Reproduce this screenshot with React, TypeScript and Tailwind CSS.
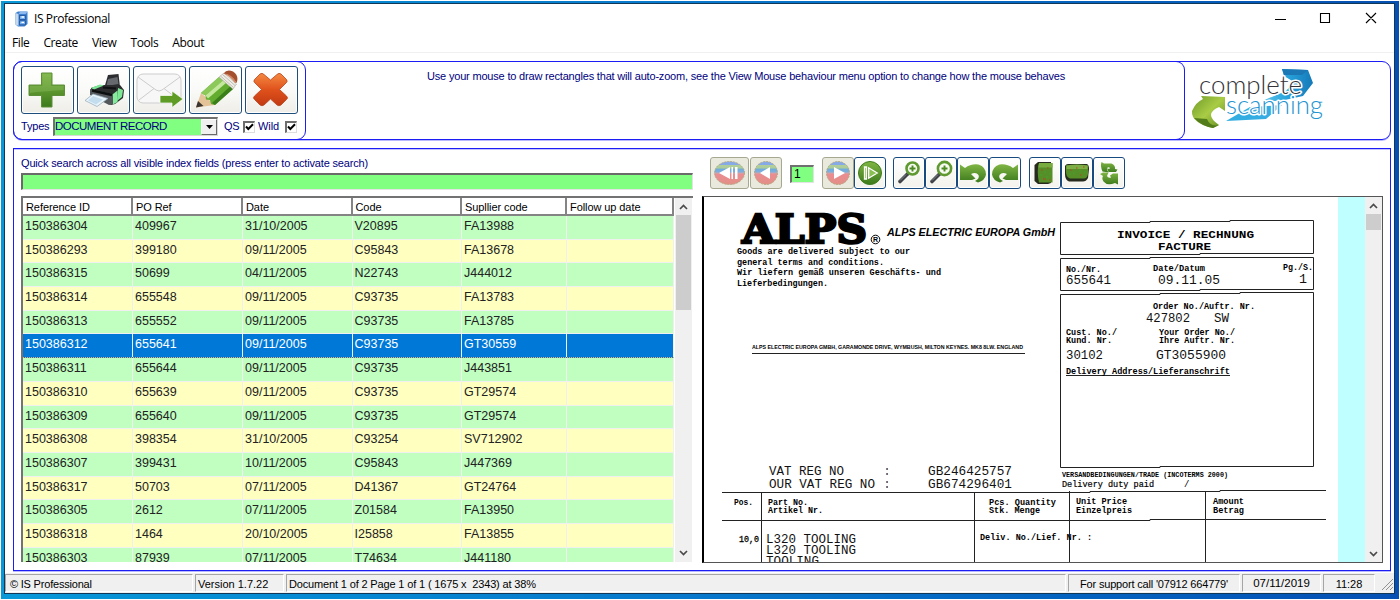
import React from "react";

const ui = "font-['Liberation_Sans',sans-serif]";

const columns = [
  { title: "Reference ID", width: "w-[110px]" },
  { title: "PO Ref", width: "w-[110px]" },
  { title: "Date", width: "w-[109.5px]" },
  { title: "Code", width: "w-[109.5px]" },
  { title: "Supllier code", width: "w-[105px]" },
  { title: "Follow up date", width: "w-[107px]" },
];

const rows = [
  ["150386304", "409967", "31/10/2005", "V20895", "FA13988"],
  ["150386293", "399180", "09/11/2005", "C95843", "FA13678"],
  ["150386315", "50699", "04/11/2005", "N22743", "J444012"],
  ["150386314", "655548", "09/11/2005", "C93735", "FA13783"],
  ["150386313", "655552", "09/11/2005", "C93735", "FA13785"],
  ["150386312", "655641", "09/11/2005", "C93735", "GT30559"],
  ["150386311", "655644", "09/11/2005", "C93735", "J443851"],
  ["150386310", "655639", "09/11/2005", "C93735", "GT29574"],
  ["150386309", "655640", "09/11/2005", "C93735", "GT29574"],
  ["150386308", "398354", "31/10/2005", "C93254", "SV712902"],
  ["150386307", "399431", "10/11/2005", "C95843", "J447369"],
  ["150386317", "50703", "07/11/2005", "D41367", "GT24764"],
  ["150386305", "2612", "07/11/2005", "Z01584", "FA13950"],
  ["150386318", "1464", "20/10/2005", "I25858", "FA13855"],
  ["150386303", "87939", "07/11/2005", "T74634", "J441180"],
];
const selectedRow = 5;

function Gradients() {
  return (
    <svg className="absolute h-0 w-0" aria-hidden="true">
      <defs>
        <linearGradient id="green" x1="0" y1="0" x2="0" y2="1">
          <stop offset="0" stopColor="#7fb544" />
          <stop offset="1" stopColor="#3c7a1c" />
        </linearGradient>
        <linearGradient id="red" x1="0" y1="0" x2="0" y2="1">
          <stop offset="0" stopColor="#f58a42" />
          <stop offset="0.5" stopColor="#e0521c" />
          <stop offset="1" stopColor="#c23a12" />
        </linearGradient>
        <linearGradient id="faded" x1="0" y1="0" x2="0" y2="1">
          <stop offset="0" stopColor="#86a9e8" />
          <stop offset="0.14" stopColor="#86a9e8" />
          <stop offset="0.15" stopColor="#b3cf98" />
          <stop offset="0.3" stopColor="#a9cc9c" />
          <stop offset="0.31" stopColor="#6fabdc" />
          <stop offset="0.46" stopColor="#7fb0dc" />
          <stop offset="0.5" stopColor="#cda4ac" />
          <stop offset="0.56" stopColor="#ea8d92" />
          <stop offset="1" stopColor="#e38f86" />
        </linearGradient>
        <linearGradient id="lime" x1="0" y1="0" x2="1" y2="1">
          <stop offset="0" stopColor="#6f9a2a" />
          <stop offset="0.5" stopColor="#a9cc45" />
          <stop offset="1" stopColor="#5d8a20" />
        </linearGradient>
        <linearGradient id="sky" x1="0" y1="0" x2="1" y2="0">
          <stop offset="0" stopColor="#5fc6ec" />
          <stop offset="0.5" stopColor="#27a3dc" />
          <stop offset="1" stopColor="#1579b8" />
        </linearGradient>
      </defs>
    </svg>
  );
}

function AppIcon() {
  return (
    <svg width="13" height="16" viewBox="0 0 13 16">
      <path d="M0.5 2 L3 0.5 H12.5 V13 L9.5 15.5 H3 L0.5 13.5Z" fill="#3b7fd0" />
      <path d="M0.5 2 L3.5 3 V15 L0.5 13.5Z" fill="#c4d8ee" />
      <path d="M3.5 3 L5 1 H12.5 L10.5 3Z" fill="#8db9ee" />
      <path d="M4.5 4.5h6v4h-6zM4.5 9.8h6v4h-6z" fill="#78b1ef" stroke="#1c4d96" strokeWidth="0.8" />
      <path d="M6.5 6h2.5M6.5 11.3h2.5" stroke="#fff" strokeWidth="1.3" />
    </svg>
  );
}

function BigButton({ children }: { children: React.ReactNode }) {
  return (
    <button className="flex h-[48px] w-[53px] items-center justify-center rounded-[3px] border border-[#1d4e7c] bg-gradient-to-b from-white via-[#fafaf8] to-[#eeede7] shadow-[inset_0_0_0_1px_#ffffff]">
      {children}
    </button>
  );
}

function PlusIcon() {
  return (
    <svg width="42" height="38" viewBox="0 0 42 38" className="-ml-[2px]">
      <path d="M15.500 2h10.500v12h12.500v10.500h-12.500v11.500h-10.500v-11.500h-12.500v-10.500h12.500z" fill="url(#green)" stroke="#5d8f38" strokeWidth="1" />
      <path d="M16.500 3h8.500v12h12.500v4c-9 1-20 1-33.500 3v-7h12.500z" fill="#8fbd62" opacity="0.4" />
    </svg>
  );
}

function PrinterIcon() {
  return (
    <svg width="44" height="40" viewBox="0 0 44 40">
      <path d="M22.500 17 L26 5 L36.500 4 L38 17Z" fill="#2b2d30" />
      <path d="M26 9 L35.500 7 L36.500 14 L24.500 16Z" fill="#66696d" />
      <path d="M9 18 L18 15 L38 15 L42 20 L41 28 L33 34 L29 35 L9 25Z" fill="#2a2c2e" />
      <path d="M9 18 L18 14.500 L22 15.500 L12 19.500Z M36 18 L41 20 L40 27 L35 31Z" fill="#7ee796" />
      <path d="M8 19 L31 24 V34 L27 35 L8 25Z" fill="#54585c" />
      <path d="M10 20.500 L30 25" stroke="#0d0e0f" strokeWidth="2.500" />
      <path d="M31 24 L35.500 20.500 V32 L31 34.500Z" fill="#84ec9b" />
      <path d="M11 24 L26 28.500 L15 36.500 L3 30.500Z" fill="#e9f3fa" stroke="#8fa8b8" strokeWidth="0.700" />
      <path d="M11 26 L21 29.500 L14 34.500 L6 30.500Z" fill="#c3ddef" />
      <path d="M21 17.500 L34 18.500" stroke="#0f1112" strokeWidth="2" />
    </svg>
  );
}

function MailIcon() {
  return (
    <svg width="48" height="38" viewBox="0 0 48 38">
      <rect x="1" y="3" width="44" height="29" rx="6" fill="#f7f7f7" stroke="#cdcdcd" />
      <path d="M2 6 L20 19 Q23 21 26 19 L44 6 M3 29 L18 17.500 M43 29 L28 17.500" fill="none" stroke="#cccccc" strokeWidth="1" />
      <path d="M24 24.500h12v-4.500l11 8-11 8.500v-4.500h-12z" fill="#5e9c25" stroke="#fff" strokeWidth="0.700" />
    </svg>
  );
}

function PencilIcon() {
  return (
    <svg width="46" height="42" viewBox="0 0 46 42">
      <path d="M3 38.500 L8 24 L22 36Z" fill="#e4c398" />
      <path d="M3 38.500 L5 32 L10.500 37Z" fill="#3b3430" />
      <path d="M8 24 L26 8 L40 20 L22 36 L18 35 L17 31 L13 30.500 L12.500 26.500Z" fill="#62ad2f" />
      <path d="M8 24 L26 8 L30 11.500 L12.500 26.500Z" fill="#8dc95a" />
      <path d="M12.500 26.500 L30 11.500 L33 14 L15 29.500Z" fill="#c3e79b" />
      <path d="M19 34 L37 17.500 L40 20 L22 36Z" fill="#3b7f1b" />
      <path d="M26 8 L31 4 L43.500 15 L40 20Z" fill="#efede6" stroke="#a9a69c" strokeWidth="0.600" />
      <path d="M27.500 7 L40.500 18.500 M29.500 5.500 L42 16.500" stroke="#b3b0a6" strokeWidth="0.800" />
      <path d="M30.500 4.500 Q34 -0.500 40 2.500 Q46.500 7 43.500 14 Q39 6 30.500 4.500Z" fill="#a4502f" />
      <path d="M30.500 4.500 Q39 4.500 43.500 14 L42 14 Q37 7 30.500 4.500Z" fill="#cf8360" />
    </svg>
  );
}

function CrossIcon() {
  return (
    <svg width="42" height="38" viewBox="0 0 42 38" className="-ml-[1px]">
      <path d="M10 3 Q12 1.500 14 3.500 L20.500 9 L27 3.500 Q29 1.500 31 3 L36.500 8.500 Q38 10.500 36 12 L29.500 18.500 L36.500 25 Q38.500 27 36.500 28.500 L31 34 Q29 35.500 27 34 L20.500 28 L14 34 Q12 35.500 10 34 L4.500 28.500 Q2.500 27 4.500 25 L11.500 18.500 L5 12 Q3 10.500 4.500 8.500Z" fill="url(#red)" stroke="#b8441c" strokeWidth="0.800" />
    </svg>
  );
}

function Check() {
  return (
    <span className="flex h-[12px] w-[12px] shrink-0 items-center justify-center border-2 border-b border-r border-[#6d6d6d] border-b-[#dddddd] border-r-[#dddddd] bg-white">
      <svg width="9" height="9" viewBox="0 0 9 9">
        <path d="M1 3.500 L3.300 6 L8 1.300" fill="none" stroke="#000" strokeWidth="2" />
      </svg>
    </span>
  );
}

function Logo() {
  return (
    <svg width="138" height="68" viewBox="1189 66 138 68">
      <path d="M1282 69 L1308 70 L1313 83 L1303 96 L1280 101 L1262 101 L1286 91 L1294 82 L1284 76Z" fill="url(#sky)" />
      <path d="M1282 69 L1308 70 L1302 75 L1284 75Z" fill="#1b78b5" />
      <path d="M1226 121 L1250 107 L1282 105 L1266 119Z" fill="#34aee2" />
      <path d="M1201 96 L1225 97 L1225 111 L1219 107 Q1203 114 1219 125 L1213 128 Q1191 123 1192 111 Q1196 102 1203 99Z" fill="url(#lime)" />
      <path d="M1207 119 Q1210 127 1219 125 L1213 128 Q1201 126 1194 118Z" fill="#537d1c" />
      <g fontFamily="Lato, sans-serif" fontWeight="300" strokeLinejoin="round" paintOrder="stroke" stroke="#fff" strokeWidth="3">
        <text x="1199" y="94" fontSize="25" textLength="103" lengthAdjust="spacingAndGlyphs" fill="#333338">complete</text>
        <text x="1226" y="114" fontSize="25" textLength="97" lengthAdjust="spacingAndGlyphs" fill="#1f95d2">scanning</text>
      </g>
    </svg>
  );
}

function ToolButton({ children, off, wide }: { children: React.ReactNode; off?: boolean; wide?: boolean }) {
  return (
    <button
      className={
        "flex h-[32px] shrink-0 items-center justify-center rounded-[3px] border " +
        (wide ? "w-[39px] " : "w-[32px] ") +
        (off
          ? "border-[#a7a890] bg-[#eae9de]"
          : "border-[#174a7e] bg-gradient-to-b from-white to-[#f3f2ec] shadow-[inset_0_0_0_1px_#ffffff]")
      }
    >
      {children}
    </button>
  );
}

function RoundIcon({ kind, off }: { kind: "first" | "prev" | "next" | "last"; off?: boolean }) {
  const w = kind === "first" ? 33 : 26;
  const c = w / 2;
  return (
    <svg width={w} height="26" viewBox={`0 0 ${w} 26`} className="shrink-0">
      <ellipse cx={c} cy="13" rx={c - 1.5} ry="11.500" fill={off ? "url(#faded)" : "url(#green)"} stroke={off ? "#b3ac86" : "#3f7d1d"} strokeDasharray={off ? "2 1" : undefined} />
      {kind === "first" && <path d="M17 7v12L6 13zM18.500 7h1.500v12h-1.500zM22 7h2.500v12h-2.500z" fill="#fff" />}
      {kind === "prev" && <path d="M17 7v12L7 13z" fill="#fff" />}
      {kind === "next" && <path d="M9 7v12L20 13z" fill="#fff" />}
      {kind === "last" && <path d="M7.500 7h2v12h-2z M11.700 7.800v10.400l8.500-5.200z" fill="#8abf52" stroke="#fff" strokeWidth="1.300" />}
    </svg>
  );
}

function ZoomIcon({ big }: { big?: boolean }) {
  return (
    <svg width="26" height="26" viewBox="0 0 26 26" className="shrink-0">
      <path d="M11.500 14 L4 21.500" stroke="#3f4347" strokeWidth="3.600" strokeLinecap="round" />
      <path d="M10 14.500 L4 20.500" stroke="#8d9195" strokeWidth="0.900" />
      <circle cx="16.500" cy="8.500" r={big ? 6.6 : 6} fill="#f8fbf4" stroke="#5f9a30" strokeWidth="2.600" />
      <path d="M16.500 5.500v6M13.500 8.500h6" stroke="#4c8b22" strokeWidth="1.900" />
    </svg>
  );
}

function TurnIcon({ flip }: { flip?: boolean }) {
  return (
    <svg width="28" height="26" viewBox="0 0 28 26" className={flip ? "shrink-0 -scale-x-100" : "shrink-0"}>
      <path d="M1 4.500 L6 8 Q12 3.500 19.500 4.500 Q27 7 27 14.500 Q26 20.500 19 22.500 L16 21 Q21 18.500 19.500 15 Q17 11.500 12 14 L16.500 18.500 L13 20 L1 20Z" fill="url(#green)" />
    </svg>
  );
}

const redSpecks = "#b0472a";
const greenSpecks = "#3fa32c";

function PageIcon({ wide }: { wide?: boolean }) {
  return wide ? (
    <svg width="28" height="24" viewBox="0 0 28 24" className="shrink-0">
      <path d="M2 5 Q3 3 5 3 H24 Q26 4 26 8 L25 17 Q23 20.500 20 20.500 H6 Q2 19 2 13Z" fill="#262b1e" />
      <path d="M3 4.500 Q14 2.500 25 4.500 V13 Q24 17.500 21 17.500 H7 Q3 16 3 11Z" fill="#568f28" />
      <path d="M3.500 4.500 Q14 3 24.500 4.500v3.500H3.500z" fill="#7cae44" />
      <path d="M7 9h1.500M13 7h1.500M20 6h1.500M17 14h1.500" stroke={redSpecks} />
      <path d="M10 12h2M16 10h2M6 13h2M21 11h2" stroke={greenSpecks} />
    </svg>
  ) : (
    <svg width="26" height="26" viewBox="0 0 26 26" className="shrink-0">
      <path d="M2.500 5 L6 2 H19 V23 L16 24 H6 L2.500 21Z" fill="#262b1e" />
      <path d="M7 3 H20.500 V22.500 H7 Q4.500 12 7 3Z" fill="#568f28" />
      <path d="M7 3h13.500v4.500H6.300z" fill="#78ac40" />
      <path d="M9 10h1.500M15 8h1.500M11 19h3M17 20h1.500" stroke={redSpecks} />
      <path d="M12 12h2M17 14h2M8 15h2M14 17h2" stroke={greenSpecks} />
    </svg>
  );
}

function SwapIcon() {
  return (
    <svg width="24" height="26" viewBox="0 0 24 26" className="shrink-0">
      <path d="M4.500 2 L7 3.500 H14.500 Q18.500 5 18 9 L20.500 9.500 L19 12 H11.500 L10.500 9 L13 8.500 Q12.500 6.500 10.500 7.500 Q9.500 9.500 11.500 12.500 L5.500 11.500 Q3 6 4.500 2Z" fill="url(#green)" />
      <path d="M3 14 L6 12.500 H11.500 L10 16 Q11 18.500 14 17.500 L13 15.500 L16 13.500 H21 V24.500 L18 23 Q10 26 6.500 21.500 Q4.500 18.500 6 16Z" fill="url(#green)" />
    </svg>
  );
}

function Chevron({ down }: { down?: boolean }) {
  return (
    <svg width="9" height="6" viewBox="0 0 9 6">
      <path d={down ? "M1 1 L4.500 4.500 L8 1" : "M1 5 L4.500 1.500 L8 5"} fill="none" stroke="#4a4a4a" strokeWidth="1.700" />
    </svg>
  );
}

type Line = [number, number, string, number];

const boldLines: Line[] = [
  [737, 254, "Goods are delivered subject to our", 173],
  [737, 264.500, "general terms and conditions.", 147],
  [737, 275, "Wir liefern gemäß unseren Geschäfts- und", 204],
  [737, 285.500, "Lieferbedingungen.", 91],
  [1066, 271.500, "No./Nr.", 35],
  [1153, 271, "Date/Datum", 52],
  [1283, 270, "Pg./S.", 30],
  [1153, 308.500, "Order No./Auftr. Nr.", 102],
  [1066, 334.500, "Cust. No./", 51],
  [1066, 343, "Kund. Nr.", 46],
  [1159, 334.500, "Your Order No./", 76],
  [1159, 343, "Ihre Auftr. Nr.", 76],
  [1066, 374, "Delivery Address/Lieferanschrift", 164],
  [734, 504.500, "Pos.", 19],
  [768, 504.500, "Part No.", 40],
  [768, 513, "Artikel Nr.", 55],
  [989, 504.500, "Pcs. Quantity", 67],
  [989, 513, "Stk. Menge", 51],
  [1076, 504, "Unit Price", 51],
  [1076, 512.500, "Einzelpreis", 56],
  [1213, 504, "Amount", 31],
  [1213, 512.500, "Betrag", 31],
  [980, 539.500, "Deliv. No./Lief. Nr. :", 112],
];

const typedLines: Line[] = [
  [1066, 284, "655641", 45],
  [1158, 283.500, "09.11.05", 62],
  [1299, 283, "1", 8],
  [1146, 321.500, "427802", 44],
  [1214, 321.500, "SW", 15],
  [1066, 358.500, "30102", 37],
  [1156, 358.500, "GT3055900", 70],
  [769, 475, "VAT REG NO", 75],
  [884, 475, ":", 6],
  [769, 487.500, "OUR VAT REG NO", 106],
  [884, 487.500, ":", 6],
  [928, 475, "GB246425757", 84],
  [928, 487.500, "GB674296401", 84],
  [766, 543, "L320 TOOLING", 90],
  [766, 554, "L320 TOOLING", 90],
  [766, 565, "TOOLING", 53],
];

function ScannedInvoice() {
  return (
    <svg width="634" height="365" viewBox="704 197 634 365" className="block shrink-0 bg-white">
      <text x="742" y="243" fontFamily="'DejaVu Serif', serif" fontWeight="bold" fontSize="40" textLength="125" lengthAdjust="spacingAndGlyphs" stroke="#000" strokeWidth="2.400">ALPS</text>
      <circle cx="875.500" cy="239.500" r="4.300" fill="none" stroke="#000" />
      <text x="873" y="242.300" fontFamily="'Liberation Sans', sans-serif" fontSize="7" fontWeight="bold">R</text>
      <text x="887" y="235.500" fontFamily="'Liberation Sans', sans-serif" fontWeight="bold" fontStyle="italic" fontSize="11.500" textLength="168" lengthAdjust="spacingAndGlyphs">ALPS ELECTRIC EUROPA GmbH</text>
      <g fill="none" stroke="#222" strokeWidth="1">
        <path d="M1060.500 222.500 H1150 V221.500 H1230 V220.500 H1313.500 V253.500 H1200 V254.500 H1060.500Z" />
        <path d="M1060.500 258.500 H1150 V257.500 H1313.500 V289.500 H1200 V290.500 H1060.500Z" />
        <path d="M1060.500 294.500 H1160 V293.500 H1240 V292.500 H1313.500 V466.500 H1160 V467.500 H1060.500Z" />
        <path d="M752 353.500 H1025 M722 492.500 H1090 V491.500 H1220 V490.500 H1326 M722 520.500 H1150 V519.500 H1326" />
        <path d="M761.500 492 V563 M974.500 492 V563 M1069.500 491 V563 M1205.500 491 V563" />
        <path d="M1066 375.500 H1230" />
      </g>
      <g fontFamily="'Liberation Mono', monospace" fontWeight="bold" fontSize="11">
        <text x="1117" y="237.500" textLength="137" lengthAdjust="spacingAndGlyphs">INVOICE / RECHNUNG</text>
        <text x="1158" y="249.500" textLength="53" lengthAdjust="spacingAndGlyphs">FACTURE</text>
      </g>
      <g fontFamily="'Liberation Mono', monospace" fontWeight="bold" fontSize="8.500">
        {boldLines.map(([x, y, text, w]) => (
          <text key={`${x}-${y}`} x={x} y={y} textLength={w} lengthAdjust="spacingAndGlyphs">{text}</text>
        ))}
      </g>
      <g fontFamily="'Liberation Mono', monospace" fontSize="12" fill="#111">
        {typedLines.map(([x, y, text, w]) => (
          <text key={`${x}-${y}`} x={x} y={y} textLength={w} lengthAdjust="spacingAndGlyphs">{text}</text>
        ))}
      </g>
      <text x="739" y="541.500" fontFamily="'Liberation Mono', monospace" fontSize="9" stroke="#000" strokeWidth="0.300" textLength="20" lengthAdjust="spacingAndGlyphs">10,0</text>
      <text x="752" y="349" fontFamily="'Liberation Sans', sans-serif" fontSize="6" fontWeight="bold" textLength="271" lengthAdjust="spacingAndGlyphs">ALPS ELECTRIC EUROPA GMBH, GARAMONDE DRIVE, WYMBUSH, MILTON KEYNES. MK8 8LW. ENGLAND</text>
      <text x="1062" y="477" fontFamily="'Liberation Mono', monospace" fontSize="7" fontWeight="bold" textLength="166" lengthAdjust="spacingAndGlyphs">VERSANDBEDINGUNGEN/TRADE (INCOTERMS 2000)</text>
      <text x="1062" y="487" fontFamily="'Liberation Mono', monospace" fontSize="9" stroke="#000" strokeWidth="0.200" textLength="92" lengthAdjust="spacingAndGlyphs">Delivery duty paid</text>
      <text x="1184" y="487" fontFamily="'Liberation Mono', monospace" fontSize="9">/</text>
    </svg>
  );
}

function StatusCell({ className, children }: { className: string; children?: React.ReactNode }) {
  return (
    <div className={"flex h-[18px] shrink-0 items-center whitespace-pre border border-[#a5a5a5] border-b-white border-r-white pt-[2px] " + className}>
      {children}
    </div>
  );
}

export default function App() {
  return (
    <div className={`h-[600px] w-[1400px] overflow-hidden bg-white p-px text-[11px] leading-none text-black ${ui}`}>
      <Gradients />
      <div className="h-[598px] w-[1398px] bg-gradient-to-r from-[#0898d8] via-[#0878cc] to-[#0650b4] pl-[3px] pt-[2px]">
        <div className="flex h-[591px] w-[1391px] flex-col border border-[#123858] bg-white">
          <div className={"flex h-[29px] items-center pl-[10px] font-['Open_Sans',sans-serif]"}>
            <AppIcon />
            <span className="ml-[6px] text-[12px] tracking-[-0.4px]">IS Professional</span>
            <div className="ml-auto flex items-center pr-[16px]">
              <svg width="104" height="14" viewBox="0 0 104 14" fill="none" stroke="#000" strokeWidth="1.100">
                <path d="M1 7.500h11M46.500 1.500h9v9h-9zM92 1l10 10M102 1l-10 10" />
              </svg>
            </div>
          </div>
          <nav className="flex h-[19px] items-center gap-[14px] pl-[7px] pt-px font-['Open_Sans',sans-serif] text-[12px] tracking-[-0.4px]">
            <span>File</span>
            <span>Create</span>
            <span>View</span>
            <span>Tools</span>
            <span>About</span>
          </nav>
          <div className="h-px bg-[#f0f0f0]" />

          <div className="ml-[8px] mt-[8px] flex h-[79px] w-[1378px] shrink-0 rounded-[9px] border border-[#1c1cf4] text-[#000080] shadow-[0_1px_0_#b8b8ff]">
            <div className="-my-px -ml-px flex h-[79px] w-[293px] shrink-0 flex-col rounded-[9px] border border-[#1c1cf4] pl-[7px] pt-[4px]">
              <div className="flex gap-[3px]">
                <BigButton><PlusIcon /></BigButton>
                <BigButton><PrinterIcon /></BigButton>
                <BigButton><MailIcon /></BigButton>
                <BigButton><PencilIcon /></BigButton>
                <BigButton><CrossIcon /></BigButton>
              </div>
              <div className="mt-[3px] flex h-[19px] items-center">
                <span className="w-[32px] tracking-[-0.2px]">Types</span>
                <div className="flex h-[19px] w-[165px] shrink-0 items-center justify-between border-2 border-b border-r border-[#707070] border-b-[#d8d8d8] border-r-[#d8d8d8] bg-[#80ff80]">
                  <span className="text-[11.500px] tracking-[-0.5px]">DOCUMENT RECORD</span>
                  <span className="flex h-[16px] w-[16px] items-center justify-center border border-b-[#696969] border-l-white border-r-[#696969] border-t-white bg-[#f0f0f0]">
                    <svg width="7" height="4" viewBox="0 0 7 4"><path d="M0 0h7L3.500 4z" /></svg>
                  </span>
                </div>
                <span className="ml-[6px] w-[19px] tracking-[-0.4px]">QS</span>
                <Check />
                <span className="ml-[3px] w-[27px] tracking-[-0.1px]">Wild</span>
                <Check />
              </div>
            </div>
            <div className="-my-px -ml-[9px] flex h-[79px] w-[888px] shrink-0 justify-center rounded-r-[9px] border-y border-r border-[#1c1cf4] pl-[11px] pt-[8px]">
              <span className="whitespace-nowrap text-[11px] leading-[12px] tracking-[-0.185px]">
                Use your mouse to draw rectangles that will auto-zoom, see the View Mouse behaviour menu option to change how the mouse behaves
              </span>
            </div>
            <div className="pl-[4px] pt-[4px]">
              <Logo />
            </div>
          </div>

          <div className="ml-[8px] mt-[8px] flex h-[423px] w-[1378px] shrink-0 border border-[#1c1cf4] shadow-[0_1px_0_#b8b8ff,inset_0_1px_0_#c4c4ff]">
            <section className="flex w-[679px] shrink-0 flex-col pl-[7px]">
              <div className="flex h-[24px] items-center pt-[4px] text-[#000080]">
                <span className="tracking-[-0.17px]">Quick search across all visible index fields (press enter to activate search)</span>
              </div>
              <div className="h-[17px] w-[672px] border-l-2 border-t-2 border-b border-r border-[#6a6a6a] border-b-[#e3e3e3] border-r-[#e3e3e3] bg-[#80ff80]" />
              <div className="mt-[6px] flex h-[366px] w-[672px] overflow-hidden border-l-2 border-t-2 border-[#737373]">
                <div className="flex w-[651px] shrink-0 flex-col">
                  <div className="flex h-[18px] shrink-0 border-b-2 border-[#848484] tracking-[-0.08px]">
                    {columns.map((c) => (
                      <div key={c.title} className={"flex shrink-0 items-center border-r-2 border-[#848484] pl-[3px] pt-[3px] " + c.width}>
                        {c.title}
                      </div>
                    ))}
                  </div>
                  {rows.map((r, i) => (
                    <div
                      key={r[0]}
                      className={
                        "flex h-[23.7px] shrink-0 border-b text-[12.500px] " +
                        (i === selectedRow
                          ? "border-dotted border-[#e8b070] bg-[#0078d7] text-white"
                          : i % 2
                            ? "border-[#f0f0f0] bg-[#ffffc0] text-[#222]"
                            : "border-[#f0f0f0] bg-[#c0ffc0] text-[#222]")
                      }
                    >
                      {columns.map((c, j) => (
                        <div key={c.title} className={"shrink-0 border-r border-[#f0f0f0] pl-[2px] pt-[3px] leading-[14px] " + c.width}>
                          {r[j]}
                        </div>
                      ))}
                    </div>
                  ))}
                </div>
                <div className="ml-[1px] flex w-[17px] flex-col items-center justify-between bg-[#f0f0f0]">
                  <div className="flex h-[17px] items-center"><Chevron /></div>
                  <div className="h-[95px] w-[15px] bg-[#cdcdcd]" />
                  <div className="flex-1" />
                  <div className="flex h-[19px] items-center"><Chevron down /></div>
                </div>
              </div>
            </section>

            <section className="flex flex-col pl-[9px] pt-[8px]">
              <div className="flex h-[32px] items-center pl-[8px]">
                <ToolButton off wide><RoundIcon kind="first" off /></ToolButton>
                <div className="w-px" />
                <ToolButton off><RoundIcon kind="prev" off /></ToolButton>
                <div className="ml-[8px] mr-[8px] mt-px flex h-[18px] w-[24px] items-center border-2 border-b border-r border-[#6f6f6f] border-b-[#e3e3e3] border-r-[#e3e3e3] bg-[#80ff80] pl-[2px] text-[12px]">1</div>
                <ToolButton off><RoundIcon kind="next" off /></ToolButton>
                <ToolButton><RoundIcon kind="last" /></ToolButton>
                <div className="w-[7px]" />
                <ToolButton><ZoomIcon /></ToolButton>
                <ToolButton><ZoomIcon big /></ToolButton>
                <ToolButton><TurnIcon /></ToolButton>
                <ToolButton><TurnIcon flip /></ToolButton>
                <div className="w-[8px]" />
                <ToolButton><PageIcon /></ToolButton>
                <ToolButton><PageIcon wide /></ToolButton>
                <ToolButton><SwapIcon /></ToolButton>
              </div>
              <div className="mt-[7px] flex h-[367px] w-[681px] overflow-hidden border border-l-2 border-[#555] border-l-black">
                <ScannedInvoice />
                <div className="w-[27px] shrink-0 bg-[#c0ffff]" />
                <div className="flex flex-1 flex-col items-center bg-[#f0f0f0]">
                  <div className="flex h-[17px] items-center"><Chevron /></div>
                  <div className="h-[16px] w-[15px] bg-[#cdcdcd]" />
                  <div className="flex-1" />
                  <div className="flex h-[17px] items-center"><Chevron down /></div>
                </div>
              </div>
            </section>
          </div>

          <footer className="mt-auto flex h-[20px] shrink-0 items-center gap-[2px] bg-[#f0f0f0]">
            <StatusCell className="w-[188px] pl-[4px] tracking-[-0.2px]">© IS Professional</StatusCell>
            <StatusCell className="w-[89px] pl-[2px]">Version 1.7.22</StatusCell>
            <StatusCell className="w-[780px] pl-[2px] tracking-[-0.15px]">Document 1 of 2 Page 1 of 1 ( 1675 x  2343) at 38%</StatusCell>
            <StatusCell className="w-[172px] justify-center tracking-[-0.18px]">For support call '07912 664779'</StatusCell>
            <StatusCell className="w-[79px] justify-center text-[11.500px]">07/11/2019</StatusCell>
            <StatusCell className="w-[52px] justify-center">11:28</StatusCell>
            <svg width="13" height="16" viewBox="0 0 13 16" className="ml-auto" stroke="#929292" fill="none">
              <path d="M1 15 L12 4 M5 15 L12 8 M9 15 L12 12" />
            </svg>
          </footer>
        </div>
      </div>
    </div>
  );
}
